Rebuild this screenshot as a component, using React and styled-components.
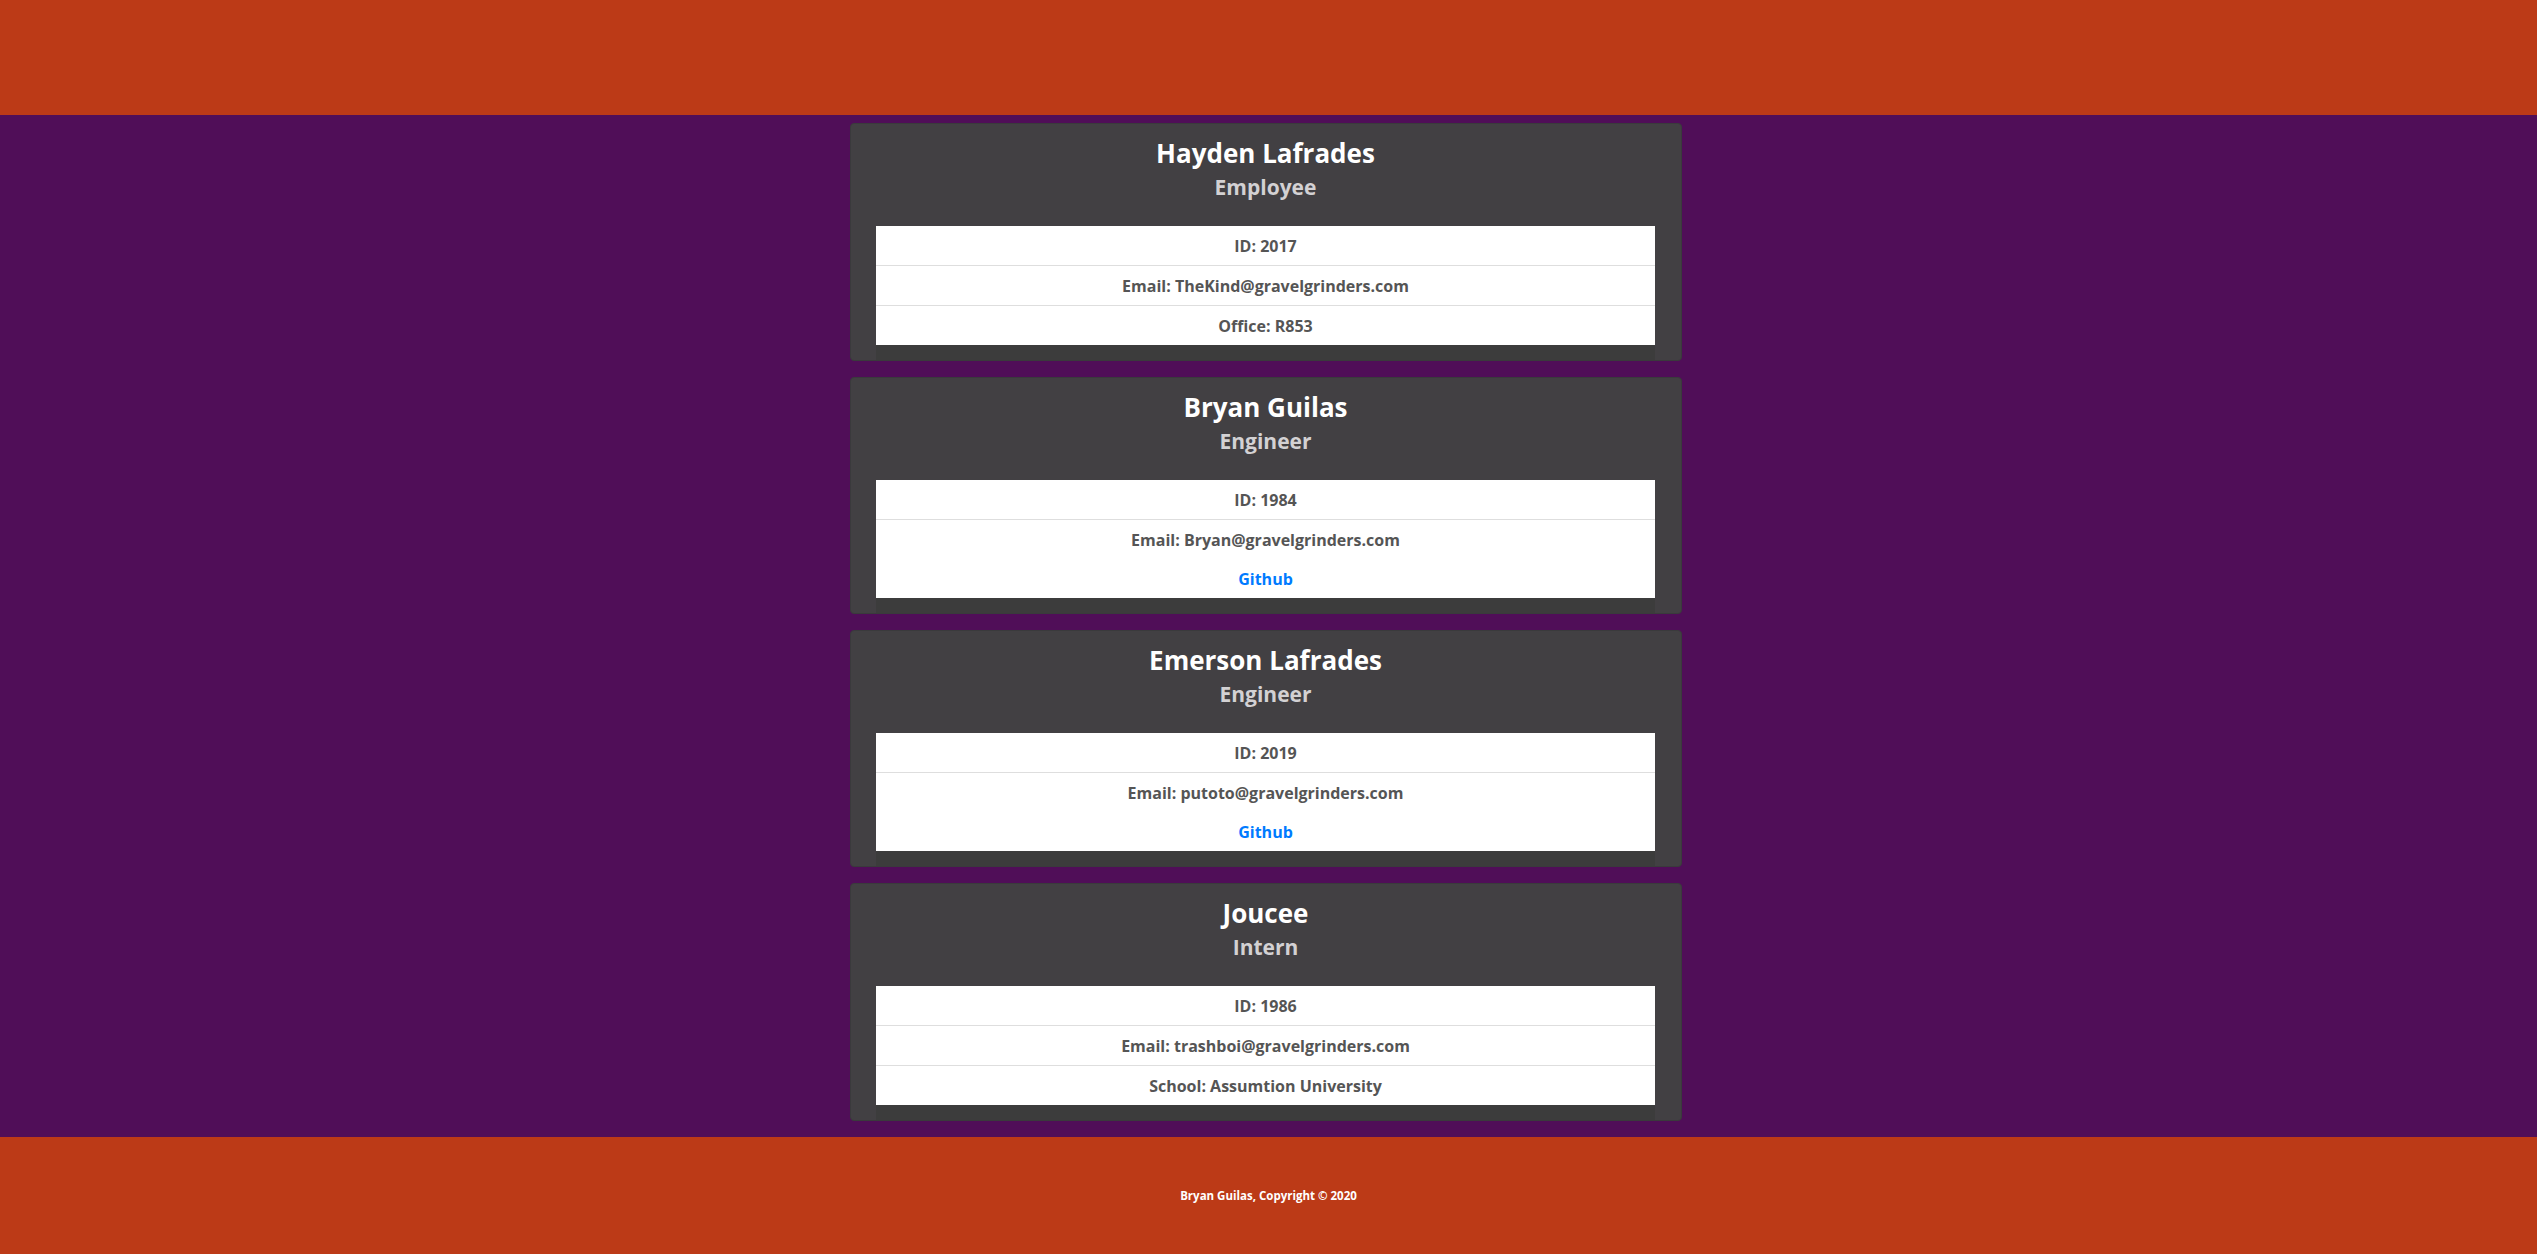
import React from "react";
import styled, { createGlobalStyle } from "styled-components";

const employees = [
  {
    name: "Hayden Lafrades",
    role: "Employee",
    id: 2017,
    email: "TheKind@gravelgrinders.com",
    extra: { label: "Office", value: "R853" },
  },
  {
    name: "Bryan Guilas",
    role: "Engineer",
    id: 1984,
    email: "Bryan@gravelgrinders.com",
    github: "bguilas",
  },
  {
    name: "Emerson Lafrades",
    role: "Engineer",
    id: 2019,
    email: "putoto@gravelgrinders.com",
    github: "putoto",
  },
  {
    name: "Joucee",
    role: "Intern",
    id: 1986,
    email: "trashboi@gravelgrinders.com",
    extra: { label: "School", value: "Assumtion University" },
  },
];

const GlobalStyle = createGlobalStyle`
  body {
    margin: 0;
    font-family: "Open Sans", "Liberation Sans", sans-serif;
    background: #500e58;
  }
`;

function EmployeeCard({ employee }) {
  return (
    <Card>
      <CardHeader>
        <Name>{employee.name}</Name>
        <Role>{employee.role}</Role>
      </CardHeader>
      <InfoList>
        <InfoItem>ID: {employee.id}</InfoItem>
        <InfoItem>Email: {employee.email}</InfoItem>
        {employee.github ? (
          <GithubLink href={"#" + employee.github}>Github</GithubLink>
        ) : (
          <InfoItem>
            {employee.extra.label}: {employee.extra.value}
          </InfoItem>
        )}
      </InfoList>
      <ListFoot />
    </Card>
  );
}

function App() {
  return (
    <Page>
      <GlobalStyle />
      <Header />
      <Main>
        {employees.map((employee) => (
          <EmployeeCard key={employee.id} employee={employee} />
        ))}
      </Main>
      <Footer>Bryan Guilas, Copyright © 2020</Footer>
    </Page>
  );
}

const Page = styled.div`
  display: flex;
  flex-direction: column;
  min-height: 100vh;
`;

const Header = styled.header`
  height: 115px;
  background: #bc3a17;
`;

const Main = styled.main`
  flex: 1;
  display: flex;
  flex-direction: column;
  align-items: center;
  padding: 8px 5px 16px 0;
  gap: 16px;
`;

const Card = styled.div`
  width: 832px;
  box-sizing: border-box;
  background: #424043;
  border: 1px solid #3a3a3c;
  border-radius: 4px;
  padding: 14px 26px 0 25px;
`;

const CardHeader = styled.div`
  text-align: center;
  margin-bottom: 27px;
`;

const Name = styled.h3`
  margin: 0;
  font-size: 26px;
  line-height: 31px;
  font-weight: 700;
  color: #ffffff;
`;

const Role = styled.h4`
  margin: 6px 0 0;
  font-size: 21px;
  line-height: 24px;
  font-weight: 700;
  color: #d3d1d3;
`;

const InfoList = styled.div`
  display: flex;
  flex-direction: column;
  background: #ffffff;
`;

const InfoItem = styled.div`
  padding: 7.5px 0;
  font-size: 16px;
  line-height: 24px;
  font-weight: 700;
  color: #555555;
  text-align: center;

  & + & {
    border-top: 1px solid #dedede;
  }
`;

const GithubLink = styled.a`
  display: block;
  padding: 7.5px 0;
  font-size: 16px;
  line-height: 24px;
  font-weight: 700;
  color: #007bff;
  text-align: center;
  text-decoration: none;
`;

const ListFoot = styled.div`
  height: 15px;
  background: #3c3c3c;
`;

const Footer = styled.footer`
  height: 117px;
  display: flex;
  align-items: center;
  justify-content: center;
  background: #bc3a17;
  color: #ffffff;
  font-size: 11.5px;
  font-weight: 700;
`;

export default App;
